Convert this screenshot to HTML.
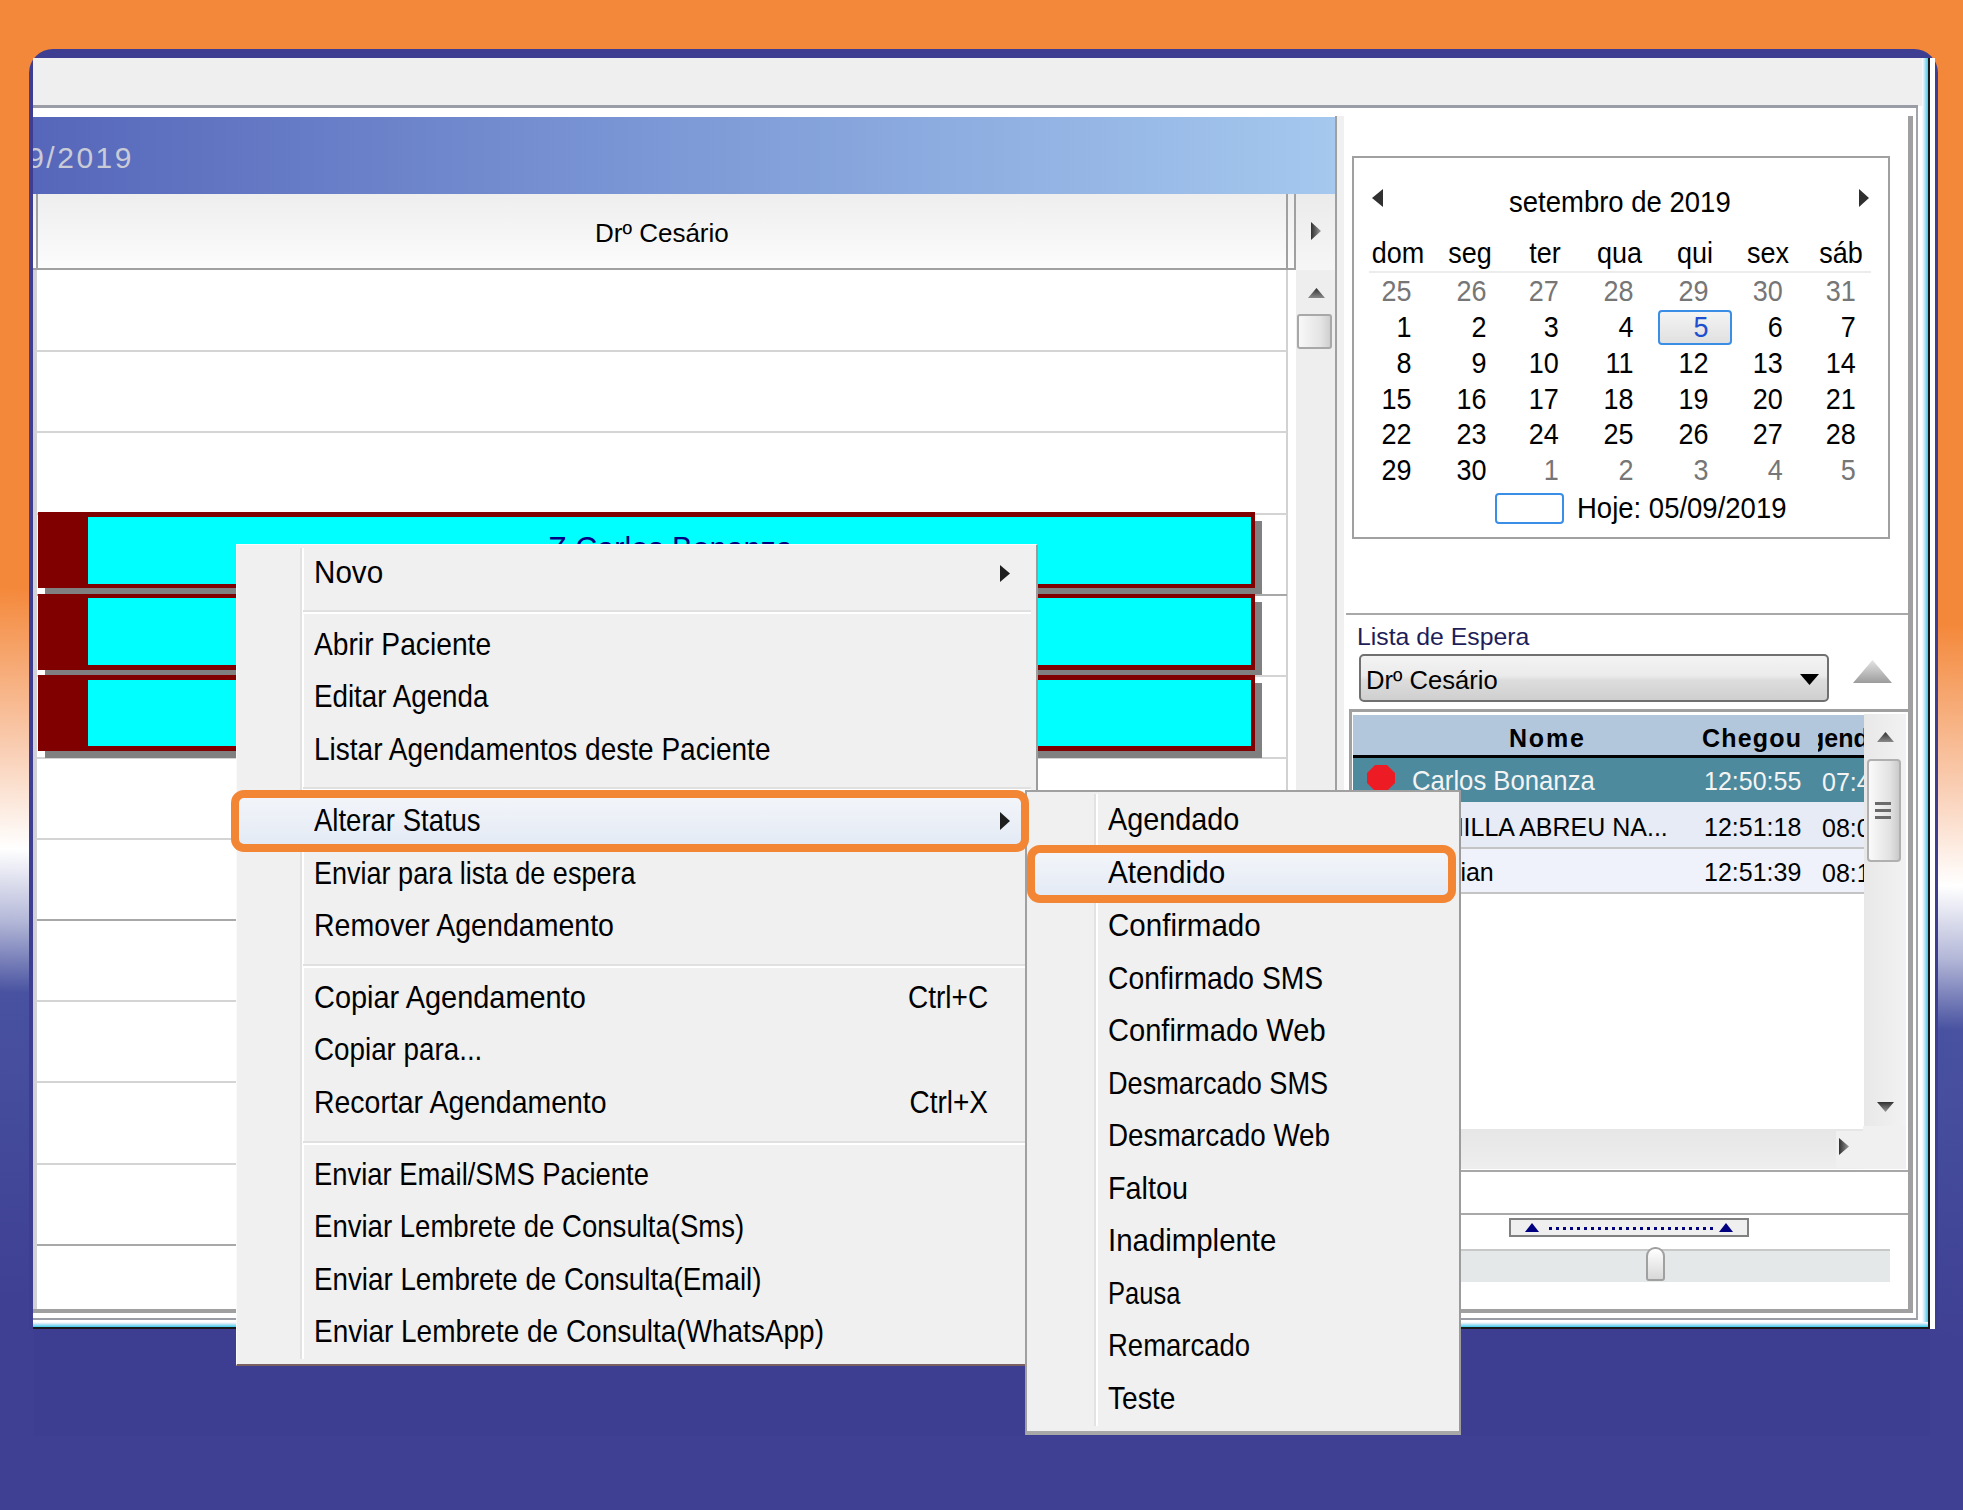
<!DOCTYPE html>
<html><head><meta charset="utf-8">
<style>
*{margin:0;padding:0;box-sizing:border-box}
html,body{width:1963px;height:1510px;overflow:hidden}
body{position:relative;font-family:"Liberation Sans",sans-serif;
background:linear-gradient(181.1deg,#F4883A 0px,#F4883A 625px,#F9CDB2 785px,#FFFFFF 886px,#B4B8D8 958px,#4852A0 1030px,#3F4093 1340px,#3F4093 1560px);}
.a{position:absolute}
.t{position:absolute;white-space:nowrap;line-height:1}
.hl{position:absolute;height:2px;background:#D4D4D4}
</style></head><body>
<!-- frame -->
<div class="a" style="left:29px;top:49px;width:1909px;height:1280px;background:#3D3E92;border-radius:24px 24px 0 0"></div>
<div class="a" style="left:34px;top:1329px;width:1896px;height:107px;background:#3D3E92"></div>
<!-- app window bg -->
<div class="a" style="left:33px;top:58px;width:1902px;height:1271px;background:#fff"></div>
<!-- toolbar -->
<div class="a" style="left:33px;top:58px;width:1892px;height:48px;background:#EFEFEF"></div>
<div class="a" style="left:33px;top:105px;width:1885px;height:3px;background:#9A9DA5"></div>
<!-- right window edge -->
<div class="a" style="left:1922px;top:58px;width:6px;height:1271px;background:linear-gradient(90deg,#FFFFFF,#D8ECF8 30%,#40CCEE 100%)"></div>
<div class="a" style="left:1928px;top:58px;width:2px;height:1271px;background:#1A1A1A"></div>
<div class="a" style="left:1930px;top:58px;width:5px;height:1271px;background:#FFFFFF"></div>

<!-- ===== LEFT SCHEDULE PANEL ===== -->
<div class="a" style="left:33px;top:117px;width:1302px;height:77px;background:linear-gradient(90deg,#5666BA 0%,#7893D3 43%,#A4C8EE 100%);overflow:hidden">
  <div class="t" style="left:-25px;top:26px;font-size:30px;color:#C9CBD6;letter-spacing:2.5px">09/2019</div>
</div>
<!-- header row -->
<div class="a" style="left:33px;top:194px;width:1262px;height:76px;background:linear-gradient(#EEEEEE,#FCFCFC)"></div>
<div class="a" style="left:36px;top:194px;width:2px;height:76px;background:#A0A0A0"></div>
<div class="a" style="left:1286px;top:194px;width:2px;height:76px;background:#A0A0A0"></div>
<div class="a" style="left:1294px;top:194px;width:2px;height:76px;background:#A0A0A0"></div>
<div class="a" style="left:33px;top:268px;width:1262px;height:2px;background:#A0A0A0"></div>
<div class="t" style="left:595px;top:220px;font-size:26px;color:#000">Drº Cesário</div>
<!-- header right arrow button -->
<div class="a" style="left:1296px;top:194px;width:39px;height:76px;background:linear-gradient(#EBEBEB,#F6F6F6)"></div>
<svg class="a" style="left:1311px;top:222px" width="10" height="18"><defs><linearGradient id="ga1" x1="0" y1="0" x2="1" y2="0"><stop offset="0" stop-color="#303030"/><stop offset="1" stop-color="#9A9A9A"/></linearGradient></defs><path d="M0 0 L10 9 L0 18 Z" fill="url(#ga1)"/></svg>

<!-- grid body -->
<div class="a" style="left:33px;top:270px;width:4px;height:1041px;background:#D2D2D6"></div>
<div class="a" style="left:1286px;top:270px;width:2px;height:1041px;background:#D2D2D2"></div>
<div class="hl" style="left:37px;top:350px;width:1250px"></div>
<div class="hl" style="left:37px;top:431px;width:1250px"></div>
<div class="hl" style="left:37px;top:513px;width:1250px"></div>
<div class="hl" style="left:37px;top:594px;width:1250px;background:#A8A8A8"></div>
<div class="hl" style="left:37px;top:675px;width:1250px"></div>
<div class="hl" style="left:37px;top:757px;width:1250px"></div>
<div class="hl" style="left:37px;top:838px;width:1250px"></div>
<div class="hl" style="left:37px;top:919px;width:1250px;background:#A8A8A8"></div>
<div class="hl" style="left:37px;top:1000px;width:1250px"></div>
<div class="hl" style="left:37px;top:1081px;width:1250px"></div>
<div class="hl" style="left:37px;top:1163px;width:1250px"></div>
<div class="hl" style="left:37px;top:1244px;width:1250px;background:#A8A8A8"></div>

<!-- vertical scrollbar -->
<div class="a" style="left:1296px;top:270px;width:39px;height:1041px;background:#EEEEEE"></div>
<svg class="a" style="left:1308px;top:288px" width="17" height="10"><defs><linearGradient id="ga2" x1="0" y1="0" x2="0" y2="1"><stop offset="0" stop-color="#303030"/><stop offset="1" stop-color="#8A8A8A"/></linearGradient></defs><path d="M0 10 L8.5 0 L17 10 Z" fill="url(#ga2)"/></svg>
<div class="a" style="left:1297px;top:314px;width:35px;height:35px;border:2px solid #A8A8A8;border-radius:3px;background:linear-gradient(90deg,#F8F8F8,#E4E4E4 70%,#CFCFCF)"></div>
<div class="a" style="left:1335px;top:116px;width:2px;height:1195px;background:#A0A0A0"></div>
<div class="a" style="left:1337px;top:116px;width:7px;height:1195px;background:#F0F0F0"></div>

<!-- appointments -->
<div class="a" style="left:45px;top:521px;width:1217px;height:73px;background:#808080"></div>
<div class="a" style="left:38px;top:512px;width:1217px;height:76px;background:#800000"></div>
<div class="a" style="left:88px;top:517px;width:1163px;height:67px;background:#00FFFF;overflow:hidden">
  <div class="t" style="left:460px;top:16px;font-size:30.6px;color:#000080">Z Carlos Bonanza</div>
</div>
<div class="a" style="left:45px;top:602px;width:1217px;height:73px;background:#808080"></div>
<div class="a" style="left:38px;top:594px;width:1217px;height:76px;background:#800000"></div>
<div class="a" style="left:88px;top:598px;width:1163px;height:67px;background:#00FFFF"></div>
<div class="a" style="left:45px;top:683px;width:1217px;height:75px;background:#808080"></div>
<div class="a" style="left:38px;top:675px;width:1217px;height:76px;background:#800000"></div>
<div class="a" style="left:88px;top:680px;width:1163px;height:66px;background:#00FFFF"></div>

<!-- bottom edges of app -->
<div class="a" style="left:33px;top:1309px;width:1880px;height:4px;background:#A0A0A0"></div>
<div class="a" style="left:33px;top:1318px;width:1885px;height:2px;background:#9A9DA5"></div>
<div class="a" style="left:33px;top:1322px;width:1895px;height:5px;background:linear-gradient(#FFFFFF,#D8ECF8 30%,#40CCEE 100%)"></div>
<div class="a" style="left:33px;top:1327px;width:1897px;height:2px;background:#1A1A1A"></div>


<!-- ===== RIGHT PANEL ===== -->
<div class="a" style="left:1908px;top:116px;width:5px;height:1197px;background:#A0A0A0"></div>
<div class="a" style="left:1916px;top:108px;width:2px;height:1212px;background:#A0A4AC"></div>
<!-- calendar box -->
<div class="a" style="left:1352px;top:156px;width:538px;height:383px;border:2px solid #A0A0A0;background:#fff"></div>
<svg class="a" style="left:1372px;top:189px" width="12" height="18"><path d="M11 0 L0 9 L11 18 Z" fill="#303030"/></svg>
<svg class="a" style="left:1858px;top:189px" width="12" height="18"><path d="M1 0 L11 9 L1 18 Z" fill="#303030"/></svg>
<div class="t" style="left:1509px;top:189px;font-size:27.5px;color:#000;transform:scaleY(1.06);transform-origin:0 22px">setembro de 2019</div>
<div class="a" style="left:1369px;top:271px;width:502px;height:2px;background:#ECECEC"></div>
<div class="t" style="left:1348.0px;width:100px;text-align:center;top:241px;font-size:27px;color:#000;transform:scaleY(1.06);transform-origin:0 22px">dom</div>
<div class="t" style="left:1420.0px;width:100px;text-align:center;top:241px;font-size:27px;color:#000;transform:scaleY(1.06);transform-origin:0 22px">seg</div>
<div class="t" style="left:1495.0px;width:100px;text-align:center;top:241px;font-size:27px;color:#000;transform:scaleY(1.06);transform-origin:0 22px">ter</div>
<div class="t" style="left:1569.5px;width:100px;text-align:center;top:241px;font-size:27px;color:#000;transform:scaleY(1.06);transform-origin:0 22px">qua</div>
<div class="t" style="left:1645.0px;width:100px;text-align:center;top:241px;font-size:27px;color:#000;transform:scaleY(1.06);transform-origin:0 22px">qui</div>
<div class="t" style="left:1718.0px;width:100px;text-align:center;top:241px;font-size:27px;color:#000;transform:scaleY(1.06);transform-origin:0 22px">sex</div>
<div class="t" style="left:1791.0px;width:100px;text-align:center;top:241px;font-size:27px;color:#000;transform:scaleY(1.06);transform-origin:0 22px">sáb</div>
<div class="t" style="left:1331.6px;width:80px;text-align:right;top:278.8px;font-size:27px;color:#767676;transform:scaleY(1.12);transform-origin:0 22px">25</div>
<div class="t" style="left:1406.5px;width:80px;text-align:right;top:278.8px;font-size:27px;color:#767676;transform:scaleY(1.12);transform-origin:0 22px">26</div>
<div class="t" style="left:1478.7px;width:80px;text-align:right;top:278.8px;font-size:27px;color:#767676;transform:scaleY(1.12);transform-origin:0 22px">27</div>
<div class="t" style="left:1553.5px;width:80px;text-align:right;top:278.8px;font-size:27px;color:#767676;transform:scaleY(1.12);transform-origin:0 22px">28</div>
<div class="t" style="left:1628.6px;width:80px;text-align:right;top:278.8px;font-size:27px;color:#767676;transform:scaleY(1.12);transform-origin:0 22px">29</div>
<div class="t" style="left:1702.9px;width:80px;text-align:right;top:278.8px;font-size:27px;color:#767676;transform:scaleY(1.12);transform-origin:0 22px">30</div>
<div class="t" style="left:1775.7px;width:80px;text-align:right;top:278.8px;font-size:27px;color:#767676;transform:scaleY(1.12);transform-origin:0 22px">31</div>
<div class="t" style="left:1331.6px;width:80px;text-align:right;top:315.0px;font-size:27px;color:#000;transform:scaleY(1.12);transform-origin:0 22px">1</div>
<div class="t" style="left:1406.5px;width:80px;text-align:right;top:315.0px;font-size:27px;color:#000;transform:scaleY(1.12);transform-origin:0 22px">2</div>
<div class="t" style="left:1478.7px;width:80px;text-align:right;top:315.0px;font-size:27px;color:#000;transform:scaleY(1.12);transform-origin:0 22px">3</div>
<div class="t" style="left:1553.5px;width:80px;text-align:right;top:315.0px;font-size:27px;color:#000;transform:scaleY(1.12);transform-origin:0 22px">4</div>
<div class="t" style="left:1702.9px;width:80px;text-align:right;top:315.0px;font-size:27px;color:#000;transform:scaleY(1.12);transform-origin:0 22px">6</div>
<div class="t" style="left:1775.7px;width:80px;text-align:right;top:315.0px;font-size:27px;color:#000;transform:scaleY(1.12);transform-origin:0 22px">7</div>
<div class="t" style="left:1331.6px;width:80px;text-align:right;top:351.0px;font-size:27px;color:#000;transform:scaleY(1.12);transform-origin:0 22px">8</div>
<div class="t" style="left:1406.5px;width:80px;text-align:right;top:351.0px;font-size:27px;color:#000;transform:scaleY(1.12);transform-origin:0 22px">9</div>
<div class="t" style="left:1478.7px;width:80px;text-align:right;top:351.0px;font-size:27px;color:#000;transform:scaleY(1.12);transform-origin:0 22px">10</div>
<div class="t" style="left:1553.5px;width:80px;text-align:right;top:351.0px;font-size:27px;color:#000;transform:scaleY(1.12);transform-origin:0 22px">11</div>
<div class="t" style="left:1628.6px;width:80px;text-align:right;top:351.0px;font-size:27px;color:#000;transform:scaleY(1.12);transform-origin:0 22px">12</div>
<div class="t" style="left:1702.9px;width:80px;text-align:right;top:351.0px;font-size:27px;color:#000;transform:scaleY(1.12);transform-origin:0 22px">13</div>
<div class="t" style="left:1775.7px;width:80px;text-align:right;top:351.0px;font-size:27px;color:#000;transform:scaleY(1.12);transform-origin:0 22px">14</div>
<div class="t" style="left:1331.6px;width:80px;text-align:right;top:386.7px;font-size:27px;color:#000;transform:scaleY(1.12);transform-origin:0 22px">15</div>
<div class="t" style="left:1406.5px;width:80px;text-align:right;top:386.7px;font-size:27px;color:#000;transform:scaleY(1.12);transform-origin:0 22px">16</div>
<div class="t" style="left:1478.7px;width:80px;text-align:right;top:386.7px;font-size:27px;color:#000;transform:scaleY(1.12);transform-origin:0 22px">17</div>
<div class="t" style="left:1553.5px;width:80px;text-align:right;top:386.7px;font-size:27px;color:#000;transform:scaleY(1.12);transform-origin:0 22px">18</div>
<div class="t" style="left:1628.6px;width:80px;text-align:right;top:386.7px;font-size:27px;color:#000;transform:scaleY(1.12);transform-origin:0 22px">19</div>
<div class="t" style="left:1702.9px;width:80px;text-align:right;top:386.7px;font-size:27px;color:#000;transform:scaleY(1.12);transform-origin:0 22px">20</div>
<div class="t" style="left:1775.7px;width:80px;text-align:right;top:386.7px;font-size:27px;color:#000;transform:scaleY(1.12);transform-origin:0 22px">21</div>
<div class="t" style="left:1331.6px;width:80px;text-align:right;top:422.3px;font-size:27px;color:#000;transform:scaleY(1.12);transform-origin:0 22px">22</div>
<div class="t" style="left:1406.5px;width:80px;text-align:right;top:422.3px;font-size:27px;color:#000;transform:scaleY(1.12);transform-origin:0 22px">23</div>
<div class="t" style="left:1478.7px;width:80px;text-align:right;top:422.3px;font-size:27px;color:#000;transform:scaleY(1.12);transform-origin:0 22px">24</div>
<div class="t" style="left:1553.5px;width:80px;text-align:right;top:422.3px;font-size:27px;color:#000;transform:scaleY(1.12);transform-origin:0 22px">25</div>
<div class="t" style="left:1628.6px;width:80px;text-align:right;top:422.3px;font-size:27px;color:#000;transform:scaleY(1.12);transform-origin:0 22px">26</div>
<div class="t" style="left:1702.9px;width:80px;text-align:right;top:422.3px;font-size:27px;color:#000;transform:scaleY(1.12);transform-origin:0 22px">27</div>
<div class="t" style="left:1775.7px;width:80px;text-align:right;top:422.3px;font-size:27px;color:#000;transform:scaleY(1.12);transform-origin:0 22px">28</div>
<div class="t" style="left:1331.6px;width:80px;text-align:right;top:458.0px;font-size:27px;color:#000;transform:scaleY(1.12);transform-origin:0 22px">29</div>
<div class="t" style="left:1406.5px;width:80px;text-align:right;top:458.0px;font-size:27px;color:#000;transform:scaleY(1.12);transform-origin:0 22px">30</div>
<div class="t" style="left:1478.7px;width:80px;text-align:right;top:458.0px;font-size:27px;color:#767676;transform:scaleY(1.12);transform-origin:0 22px">1</div>
<div class="t" style="left:1553.5px;width:80px;text-align:right;top:458.0px;font-size:27px;color:#767676;transform:scaleY(1.12);transform-origin:0 22px">2</div>
<div class="t" style="left:1628.6px;width:80px;text-align:right;top:458.0px;font-size:27px;color:#767676;transform:scaleY(1.12);transform-origin:0 22px">3</div>
<div class="t" style="left:1702.9px;width:80px;text-align:right;top:458.0px;font-size:27px;color:#767676;transform:scaleY(1.12);transform-origin:0 22px">4</div>
<div class="t" style="left:1775.7px;width:80px;text-align:right;top:458.0px;font-size:27px;color:#767676;transform:scaleY(1.12);transform-origin:0 22px">5</div>
<div class="a" style="left:1658px;top:310px;width:74px;height:35px;border:2px solid #3A8EE6;border-radius:4px;background:linear-gradient(#F4F4F4,#E0E0E0)"></div>
<div class="t" style="left:1628.6px;width:80px;text-align:right;top:315px;font-size:27px;color:#1F4FD0;transform:scaleY(1.12);transform-origin:0 22px">5</div>
<div class="a" style="left:1495px;top:493px;width:69px;height:31px;border:2px solid #3A8EE6;border-radius:4px;background:#fff"></div>
<div class="t" style="left:1577px;top:495px;font-size:27.5px;color:#000;transform:scaleY(1.06);transform-origin:0 22px">Hoje: 05/09/2019</div>

<div class="a" style="left:1346px;top:613px;width:562px;height:2px;background:#A8A8A8"></div>
<div class="t" style="left:1357px;top:625px;font-size:24.8px;color:#1E1E5A">Lista de Espera</div>
<div class="a" style="left:1359px;top:654px;width:470px;height:48px;border:2px solid #707070;border-radius:5px;background:linear-gradient(#F3F3F3 0%,#EBEBEB 45%,#DDDDDD 55%,#CFCFCF 100%)"></div>
<div class="t" style="left:1366px;top:668px;font-size:25.6px;color:#000">Drº Cesário</div>
<svg class="a" style="left:1800px;top:674px" width="19" height="11"><path d="M0 0 L19 0 L9.5 11 Z" fill="#000"/></svg>
<svg class="a" style="left:1853px;top:660px" width="39" height="23"><defs><linearGradient id="tg" x1="0" y1="0" x2="0" y2="1"><stop offset="0" stop-color="#E4E4E4"/><stop offset="1" stop-color="#9C9C9C"/></linearGradient></defs><path d="M19.5 0 L39 23 L0 23 Z" fill="url(#tg)"/></svg>

<!-- waiting list frame -->
<div class="a" style="left:1349px;top:709px;width:559px;height:463px;border-left:3px solid #A0A0A0;border-top:3px solid #A0A0A0;border-bottom:2px solid #A8A8A8;background:#fff"></div>
<div class="a" style="left:1353px;top:715px;width:511px;height:41px;background:#B3C7DC"></div>
<div class="t" style="left:1509px;top:726px;font-size:25px;font-weight:bold;color:#000;letter-spacing:1.8px">Nome</div>
<div class="t" style="left:1702px;top:726px;font-size:25px;font-weight:bold;color:#000;letter-spacing:1.2px">Chegou</div>
<div class="a" style="left:1818px;top:715px;width:46px;height:41px;overflow:hidden">
  <div class="t" style="left:-27px;top:11px;font-size:25px;font-weight:bold;color:#000">Agenda</div>
</div>
<div class="a" style="left:1353px;top:755px;width:511px;height:3px;background:#000"></div>
<div class="a" style="left:1353px;top:758px;width:511px;height:44px;background:#4E8A9E"></div>
<svg class="a" style="left:1367px;top:765px" width="28" height="26"><path d="M8 0 L20 0 L28 8 L28 18 L20 26 L8 26 L0 18 L0 8 Z" fill="#ED1C24"/></svg>
<div class="t" style="left:1412px;top:769px;font-size:25.7px;color:#F4F4F4;transform:scaleY(1.06);transform-origin:0 21px">Carlos Bonanza</div>
<div class="t" style="left:1704px;top:769px;font-size:25px;color:#F4F4F4;transform:scaleY(1.06);transform-origin:0 21px">12:50:55</div>
<div class="a" style="left:1822px;top:758px;width:42px;height:44px;overflow:hidden"><div class="t" style="left:0;top:12px;font-size:25px;color:#F4F4F4">07:40</div></div>
<div class="a" style="left:1353px;top:802px;width:511px;height:46px;background:#E6EBF6"></div>
<div class="a" style="left:1353px;top:847px;width:511px;height:2px;background:#C4C4C4"></div>
<div class="t" style="left:1408px;top:815px;font-size:25px;color:#000;transform:scaleY(1.06);transform-origin:0 21px">CAMILLA ABREU NA...</div>
<div class="t" style="left:1704px;top:815px;font-size:25px;color:#000;transform:scaleY(1.06);transform-origin:0 21px">12:51:18</div>
<div class="a" style="left:1822px;top:802px;width:42px;height:46px;overflow:hidden"><div class="t" style="left:0;top:14px;font-size:25px;color:#000">08:00</div></div>
<div class="a" style="left:1353px;top:849px;width:511px;height:44px;background:#EFF2FA"></div>
<div class="a" style="left:1353px;top:892px;width:511px;height:2px;background:#C4C4C4"></div>
<div class="t" style="left:1409px;top:860px;font-size:25px;color:#000;transform:scaleY(1.06);transform-origin:0 21px">Cristian</div>
<div class="t" style="left:1704px;top:860px;font-size:25px;color:#000;transform:scaleY(1.06);transform-origin:0 21px">12:51:39</div>
<div class="a" style="left:1822px;top:849px;width:42px;height:44px;overflow:hidden"><div class="t" style="left:0;top:12px;font-size:25px;color:#000">08:15</div></div>
<!-- list v scrollbar -->
<div class="a" style="left:1864px;top:714px;width:42px;height:413px;background:linear-gradient(90deg,#E8E8E8,#F2F2F2)"></div>
<svg class="a" style="left:1877px;top:732px" width="17" height="10"><path d="M0 10 L8.5 0 L17 10 Z" fill="url(#ga2)"/></svg>
<div class="a" style="left:1867px;top:759px;width:34px;height:103px;border:2px solid #B0B0B0;border-radius:4px;background:linear-gradient(90deg,#FAFAFA,#E2E2E2 70%,#CBCBCB)"></div>
<div class="a" style="left:1875px;top:802px;width:16px;height:3px;background:#6A6A6A"></div>
<div class="a" style="left:1875px;top:809px;width:16px;height:3px;background:#6A6A6A"></div>
<div class="a" style="left:1875px;top:816px;width:16px;height:3px;background:#6A6A6A"></div>
<svg class="a" style="left:1877px;top:1102px" width="17" height="10"><defs><linearGradient id="ga3" x1="0" y1="0" x2="0" y2="1"><stop offset="0" stop-color="#303030"/><stop offset="1" stop-color="#9A9A9A"/></linearGradient></defs><path d="M0 0 L17 0 L8.5 10 Z" fill="url(#ga3)"/></svg>
<!-- list h scrollbar -->
<div class="a" style="left:1352px;top:1129px;width:511px;height:40px;background:linear-gradient(#E6E6E6,#EEEEEE)"></div>
<div class="a" style="left:1836px;top:1131px;width:27px;height:37px;background:#F0F0F0"></div>
<div class="a" style="left:1863px;top:1126px;width:43px;height:43px;background:#F0F0F0"></div>
<svg class="a" style="left:1839px;top:1138px" width="10" height="17"><path d="M0 0 L10 8.5 L0 17 Z" fill="url(#ga1)"/></svg>
<!-- splitter -->
<div class="a" style="left:1352px;top:1213px;width:556px;height:2px;background:#A8A8A8"></div>
<div class="a" style="left:1509px;top:1218px;width:240px;height:19px;border:2px solid #808080;background:#EFEFEF"></div>
<svg class="a" style="left:1525px;top:1223px" width="14" height="9"><path d="M0 9 L7 0 L14 9 Z" fill="#000080"/></svg>
<svg class="a" style="left:1719px;top:1223px" width="14" height="9"><path d="M0 9 L7 0 L14 9 Z" fill="#000080"/></svg>
<div class="a" style="left:1549px;top:1227px;width:164px;height:3px;background:repeating-linear-gradient(90deg,#000080 0 3px,transparent 3px 7px)"></div>
<!-- slider -->
<div class="a" style="left:1352px;top:1249px;width:538px;height:33px;background:#E5E8E9;border-top:2px solid #C8C8C8"></div>
<div class="a" style="left:1646px;top:1247px;width:19px;height:34px;border:2px solid #A0A0A0;border-radius:9px 9px 3px 3px;background:linear-gradient(#FFFFFF,#D8D8D8)"></div>

<!-- ===== CONTEXT MENU ===== -->
<div class="a" style="left:236px;top:544px;width:802px;height:822px;background:#F0F0F0;border-top:1px solid #FAFAFA;border-left:1px solid #FAFAFA;border-right:2px solid #9C9C9C;border-bottom:2px solid #7A6060"></div>
<div class="a" style="left:300px;top:548px;width:2px;height:811px;background:#E2E2E2"></div>
<div class="a" style="left:302px;top:548px;width:2px;height:811px;background:#FFFFFF"></div>
<div class="a" style="left:303px;top:610px;width:728px;height:2px;background:#E0E0E0"></div>
<div class="a" style="left:303px;top:612px;width:728px;height:2px;background:#FFFFFF"></div>
<div class="a" style="left:303px;top:787px;width:728px;height:2px;background:#E0E0E0"></div>
<div class="a" style="left:303px;top:789px;width:728px;height:2px;background:#FFFFFF"></div>
<div class="a" style="left:303px;top:964px;width:728px;height:2px;background:#E0E0E0"></div>
<div class="a" style="left:303px;top:966px;width:728px;height:2px;background:#FFFFFF"></div>
<div class="a" style="left:303px;top:1141px;width:728px;height:2px;background:#E0E0E0"></div>
<div class="a" style="left:303px;top:1143px;width:728px;height:2px;background:#FFFFFF"></div>
<div class="a" style="left:240px;top:796px;width:790px;height:50px;border-radius:3px;background:linear-gradient(#F3F5F9,#E3EAF5)"></div>
<div class="t" style="left:314px;top:560px;font-size:28px;color:#000;transform:scale(1.0578,1.09);transform-origin:0 23px">Novo</div>
<div class="t" style="left:314px;top:632px;font-size:28px;color:#000;transform:scale(1.0069,1.09);transform-origin:0 23px">Abrir Paciente</div>
<div class="t" style="left:314px;top:684px;font-size:28px;color:#000;transform:scale(0.9915,1.09);transform-origin:0 23px">Editar Agenda</div>
<div class="t" style="left:314px;top:737px;font-size:28px;color:#000;transform:scale(1.0009,1.09);transform-origin:0 23px">Listar Agendamentos deste Paciente</div>
<div class="t" style="left:314px;top:808px;font-size:28px;color:#000;transform:scale(0.9822,1.09);transform-origin:0 23px">Alterar Status</div>
<div class="t" style="left:314px;top:861px;font-size:28px;color:#000;transform:scale(0.9652,1.09);transform-origin:0 23px">Enviar para lista de espera</div>
<div class="t" style="left:314px;top:913px;font-size:28px;color:#000;transform:scale(1.0198,1.09);transform-origin:0 23px">Remover Agendamento</div>
<div class="t" style="left:314px;top:985px;font-size:28px;color:#000;transform:scale(1.0332,1.09);transform-origin:0 23px">Copiar Agendamento</div>
<div class="t" style="left:314px;top:1037px;font-size:28px;color:#000;transform:scale(0.9922,1.09);transform-origin:0 23px">Copiar para...</div>
<div class="t" style="left:314px;top:1090px;font-size:28px;color:#000;transform:scale(1.0160,1.09);transform-origin:0 23px">Recortar Agendamento</div>
<div class="t" style="left:314px;top:1162px;font-size:28px;color:#000;transform:scale(0.9783,1.09);transform-origin:0 23px">Enviar Email/SMS Paciente</div>
<div class="t" style="left:314px;top:1214px;font-size:28px;color:#000;transform:scale(0.9839,1.09);transform-origin:0 23px">Enviar Lembrete de Consulta(Sms)</div>
<div class="t" style="left:314px;top:1267px;font-size:28px;color:#000;transform:scale(0.9916,1.09);transform-origin:0 23px">Enviar Lembrete de Consulta(Email)</div>
<div class="t" style="left:314px;top:1319px;font-size:28px;color:#000;transform:scale(0.9990,1.09);transform-origin:0 23px">Enviar Lembrete de Consulta(WhatsApp)</div>
<div class="t" style="left:908px;top:985px;width:80px;text-align:right;font-size:28px;color:#000;transform:scaleY(1.09);transform-origin:0 23px">Ctrl+C</div>
<div class="t" style="left:908px;top:1090px;width:80px;text-align:right;font-size:28px;color:#000;transform:scaleY(1.09);transform-origin:0 23px">Ctrl+X</div>
<svg class="a" style="left:1000px;top:565px" width="11" height="17"><path d="M0 0 L10 8.5 L0 17 Z" fill="#1E1E1E"/></svg>
<svg class="a" style="left:1000px;top:812px" width="11" height="18"><path d="M0 0 L10 9 L0 18 Z" fill="#1E1E1E"/></svg>
<!-- ===== SUBMENU ===== -->
<div class="a" style="left:1025px;top:790px;width:436px;height:645px;background:#F0F0F0;border-top:2px solid #A0A0A0;border-left:2px solid #A0A0A0;border-right:2px solid #9C9C9C;border-bottom:4px solid #A8A8A8"></div>
<div class="a" style="left:1094px;top:794px;width:2px;height:632px;background:#E2E2E2"></div>
<div class="a" style="left:1096px;top:794px;width:2px;height:632px;background:#FFFFFF"></div>
<div class="a" style="left:1034px;top:852px;width:415px;height:45px;border-radius:3px;background:linear-gradient(#F3F5F9,#E3EAF5)"></div>
<div class="t" style="left:1108px;top:807px;font-size:28px;color:#000;transform:scale(1.0286,1.09);transform-origin:0 23px">Agendado</div>
<div class="t" style="left:1108px;top:860px;font-size:28px;color:#000;transform:scale(1.0606,1.09);transform-origin:0 23px">Atendido</div>
<div class="t" style="left:1108px;top:913px;font-size:28px;color:#000;transform:scale(1.0549,1.09);transform-origin:0 23px">Confirmado</div>
<div class="t" style="left:1108px;top:966px;font-size:28px;color:#000;transform:scale(1.0094,1.09);transform-origin:0 23px">Confirmado SMS</div>
<div class="t" style="left:1108px;top:1018px;font-size:28px;color:#000;transform:scale(1.0380,1.09);transform-origin:0 23px">Confirmado Web</div>
<div class="t" style="left:1108px;top:1071px;font-size:28px;color:#000;transform:scale(0.9690,1.09);transform-origin:0 23px">Desmarcado SMS</div>
<div class="t" style="left:1108px;top:1123px;font-size:28px;color:#000;transform:scale(0.9932,1.09);transform-origin:0 23px">Desmarcado Web</div>
<div class="t" style="left:1108px;top:1176px;font-size:28px;color:#000;transform:scale(1.0263,1.09);transform-origin:0 23px">Faltou</div>
<div class="t" style="left:1108px;top:1228px;font-size:28px;color:#000;transform:scale(1.0503,1.09);transform-origin:0 23px">Inadimplente</div>
<div class="t" style="left:1108px;top:1281px;font-size:28px;color:#000;transform:scale(0.9114,1.09);transform-origin:0 23px">Pausa</div>
<div class="t" style="left:1108px;top:1333px;font-size:28px;color:#000;transform:scale(0.9819,1.09);transform-origin:0 23px">Remarcado</div>
<div class="t" style="left:1108px;top:1386px;font-size:28px;color:#000;transform:scale(1.0061,1.09);transform-origin:0 23px">Teste</div>
<div class="a" style="left:231px;top:790px;width:798px;height:62px;border:8px solid #F38634;border-radius:13px"></div>
<div class="a" style="left:1027px;top:845px;width:429px;height:58px;border:8px solid #F38634;border-radius:13px"></div>
</body></html>
